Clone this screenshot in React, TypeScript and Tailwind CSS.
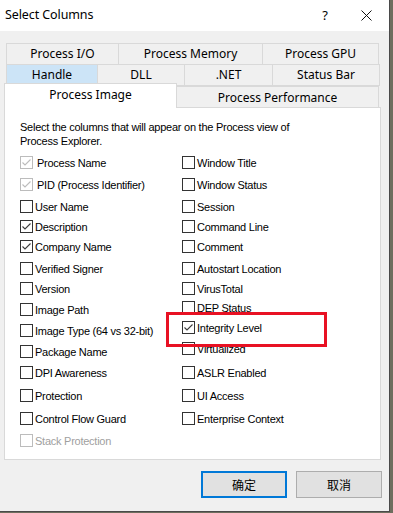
import React from "react";

type Item = { label: string; state?: "on" | "off" | "grayOn" | "disabled"; gap: string };

const left: Item[] = [
  { label: "Process Name", state: "grayOn", gap: "mb-[9px]" },
  { label: "PID (Process Identifier)", state: "grayOn", gap: "mb-[9px]" },
  { label: "User Name", gap: "mb-[7px]" },
  { label: "Description", state: "on", gap: "mb-[7px]" },
  { label: "Company Name", state: "on", gap: "mb-[9px]" },
  { label: "Verified Signer", gap: "mb-[7px]" },
  { label: "Version", gap: "mb-[8px]" },
  { label: "Image Path", gap: "mb-[8px]" },
  { label: "Image Type (64 vs 32-bit)", gap: "mb-[8px]" },
  { label: "Package Name", gap: "mb-[8px]" },
  { label: "DPI Awareness", gap: "mb-[10px]" },
  { label: "Protection", gap: "mb-[10px]" },
  { label: "Control Flow Guard", gap: "mb-[9px]" },
  { label: "Stack Protection", state: "disabled", gap: "mb-0" },
];

const right: Item[] = [
  { label: "Window Title", gap: "mb-[9px]" },
  { label: "Window Status", gap: "mb-[9px]" },
  { label: "Session", gap: "mb-[7px]" },
  { label: "Command Line", gap: "mb-[7px]" },
  { label: "Comment", gap: "mb-[9px]" },
  { label: "Autostart Location", gap: "mb-[7px]" },
  { label: "VirusTotal", gap: "mb-[6px]" },
  { label: "DEP Status", gap: "mb-[7px]" },
  { label: "Integrity Level", state: "on", gap: "mb-[8px]" },
  { label: "Virtualized", gap: "mb-[11px]" },
  { label: "ASLR Enabled", gap: "mb-[10px]" },
  { label: "UI Access", gap: "mb-[10px]" },
  { label: "Enterprise Context", gap: "mb-0" },
];

function Check({ item }: { item: Item }) {
  const st = item.state ?? "off";
  const gray = st === "grayOn" || st === "disabled";
  return (
    <div className={`flex items-center h-[13px] ${item.gap}`}>
      <svg width="13" height="13" viewBox="0 0 13 13" className="shrink-0">
        <rect
          x="0.5"
          y="0.5"
          width="12"
          height="12"
          fill="#ffffff"
          stroke={gray ? "#bcbcbc" : "#333333"}
        />
        {(st === "on" || st === "grayOn") && (
          <path
            d="M2.5 6.5 L5 9 L10.5 3.5"
            fill="none"
            stroke={gray ? "#bcbcbc" : "#3c3c3c"}
            strokeWidth="1.1"
          />
        )}
      </svg>
      <span
        className={`whitespace-nowrap ${st === "grayOn" ? "ml-[4px]" : "ml-[2px]"} ${
          st === "disabled" ? "text-[#a0a0a0]" : "text-black"
        }`}
      >
        {item.label}
      </span>
    </div>
  );
}

function Tab({ label, w, bg = "bg-[#f0f0f0]" }: { label: string; w: string; bg?: string }) {
  return (
    <div
      className={`${w} ${bg} flex items-center justify-center border border-[#d9d9d9] -ml-px first:ml-0`}
    >
      {label}
    </div>
  );
}

export default function App() {
  return (
    <div className="w-[393px] h-[513px] bg-[#6e6e5e] overflow-hidden">
      <div className="w-[390px] h-[512px] bg-[#f0f0f0] border-r border-b border-[#4a4a4a] flex flex-col font-['Noto_Sans','Liberation_Sans',sans-serif] text-[12px] text-black">
        {/* title bar */}
        <div className="h-[31px] bg-white flex items-center pl-[5px] shrink-0">
          <span className="text-[12.5px] tracking-[-0.1px]">Select Columns</span>
          <span className="ml-auto mr-[33px] text-[13px]">?</span>
          <svg width="11" height="11" viewBox="0 0 11 11" className="mr-[17px]">
            <path d="M0.5 0.5 L10.5 10.5 M10.5 0.5 L0.5 10.5" stroke="#111" strokeWidth="1" />
          </svg>
        </div>

        {/* tabs */}
        <div className="pt-[12px] pl-[4px]">
          <div className="flex h-[22px] ml-[2px] leading-none">
            <Tab label="Process I/O" w="w-[113px]" />
            <Tab label="Process Memory" w="w-[145px]" />
            <Tab label="Process GPU" w="w-[117px]" />
          </div>
          <div className="flex h-[22px] ml-[2px] -mt-px leading-none">
            <Tab label="Handle" w="w-[92px]" bg="bg-[#cce4f7]" />
            <Tab label="DLL" w="w-[88px]" />
            <Tab label=".NET" w="w-[89px]" />
            <Tab label="Status Bar" w="w-[108px]" />
          </div>
          <div className="flex items-end -mt-[3px] leading-none">
            <div className="relative z-10 w-[173px] h-[25px] bg-white border border-b-0 border-[#d9d9d9] flex items-center justify-center pb-[3px]">
              Process Image
            </div>
            <div className="w-[203px] h-[22px] -ml-px border border-b-0 border-[#d9d9d9] bg-[#f0f0f0] flex items-center justify-center">
              Process Performance
            </div>
          </div>

          {/* panel */}
          <div className="-mt-px w-[377px] h-[353px] bg-white border border-[#d9d9d9] relative font-['Liberation_Sans',Arial,sans-serif] text-[11px] tracking-[-0.25px] leading-[14px]">
            <p className="pt-[12px] pl-[15px]">
              Select the columns that will appear on the Process view of
              <br />
              Process Explorer.
            </p>
            <div className="flex pt-[8px] pl-[15px]">
              <div className="w-[162px]">
                {left.map((it) => (
                  <Check key={it.label} item={it} />
                ))}
              </div>
              <div>
                {right.map((it) => (
                  <Check key={it.label} item={it} />
                ))}
              </div>
            </div>
            {/* red highlight box */}
            <div className="absolute left-[161px] top-[204px] w-[161px] h-[35px] border-[3px] border-[#e81123]" />
          </div>
        </div>

        {/* buttons */}
        <div className="flex justify-end gap-[9px] mt-[11px] pr-[7px] font-['Noto_Sans_CJK_SC',sans-serif] text-[12px]">
          <button className="w-[86px] h-[27px] bg-[#e1e1e1] border-2 border-[#0078d7]">确定</button>
          <button className="w-[86px] h-[27px] bg-[#e1e1e1] border border-[#adadad]">取消</button>
        </div>
      </div>
    </div>
  );
}
